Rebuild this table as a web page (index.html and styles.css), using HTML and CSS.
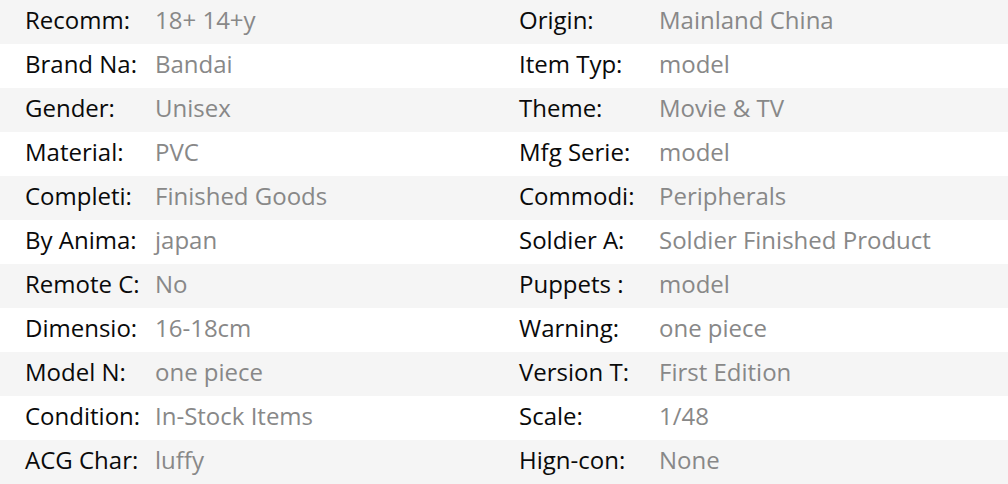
FILE: index.html
```html
<!DOCTYPE html>
<html>
<head>
<meta charset="utf-8">
<link rel="stylesheet" href="styles.css">
</head>
<body>
<div class="specs">
  <div class="row"><span class="k">Recomm:</span><span class="v">18+ 14+y</span><span class="k">Origin:</span><span class="v">Mainland China</span></div>
  <div class="row"><span class="k">Brand Na:</span><span class="v">Bandai</span><span class="k">Item Typ:</span><span class="v">model</span></div>
  <div class="row"><span class="k">Gender:</span><span class="v">Unisex</span><span class="k">Theme:</span><span class="v">Movie &amp; TV</span></div>
  <div class="row"><span class="k">Material:</span><span class="v">PVC</span><span class="k">Mfg Serie:</span><span class="v">model</span></div>
  <div class="row"><span class="k">Completi:</span><span class="v">Finished Goods</span><span class="k">Commodi:</span><span class="v">Peripherals</span></div>
  <div class="row"><span class="k">By Anima:</span><span class="v">japan</span><span class="k">Soldier A:</span><span class="v">Soldier Finished Product</span></div>
  <div class="row"><span class="k">Remote C:</span><span class="v">No</span><span class="k">Puppets :</span><span class="v">model</span></div>
  <div class="row"><span class="k">Dimensio:</span><span class="v">16-18cm</span><span class="k">Warning:</span><span class="v">one piece</span></div>
  <div class="row"><span class="k">Model N:</span><span class="v">one piece</span><span class="k">Version T:</span><span class="v">First Edition</span></div>
  <div class="row"><span class="k">Condition:</span><span class="v">In-Stock Items</span><span class="k">Scale:</span><span class="v">1/48</span></div>
  <div class="row"><span class="k">ACG Char:</span><span class="v">luffy</span><span class="k">Hign-con:</span><span class="v">None</span></div>
</div>
</body>
</html>
```
FILE: styles.css
```css
html, body {
  margin: 0;
  padding: 0;
  background: #ffffff;
}
body {
  font-family: "Open Sans", "Noto Sans", "Liberation Sans", sans-serif;
  font-size: 24px;
}
.specs {
  width: 1008px;
}
.row {
  display: grid;
  grid-template-columns: 130px 364px 140px 1fr;
  align-items: center;
  height: 44px;
  padding: 0 0 4px 25px;
  box-sizing: border-box;
  white-space: nowrap;
  line-height: 1;
}
.row:nth-child(odd) {
  background: #f5f5f5;
}
.k {
  color: #0a0a0a;
}
.v {
  color: #888888;
}
```
